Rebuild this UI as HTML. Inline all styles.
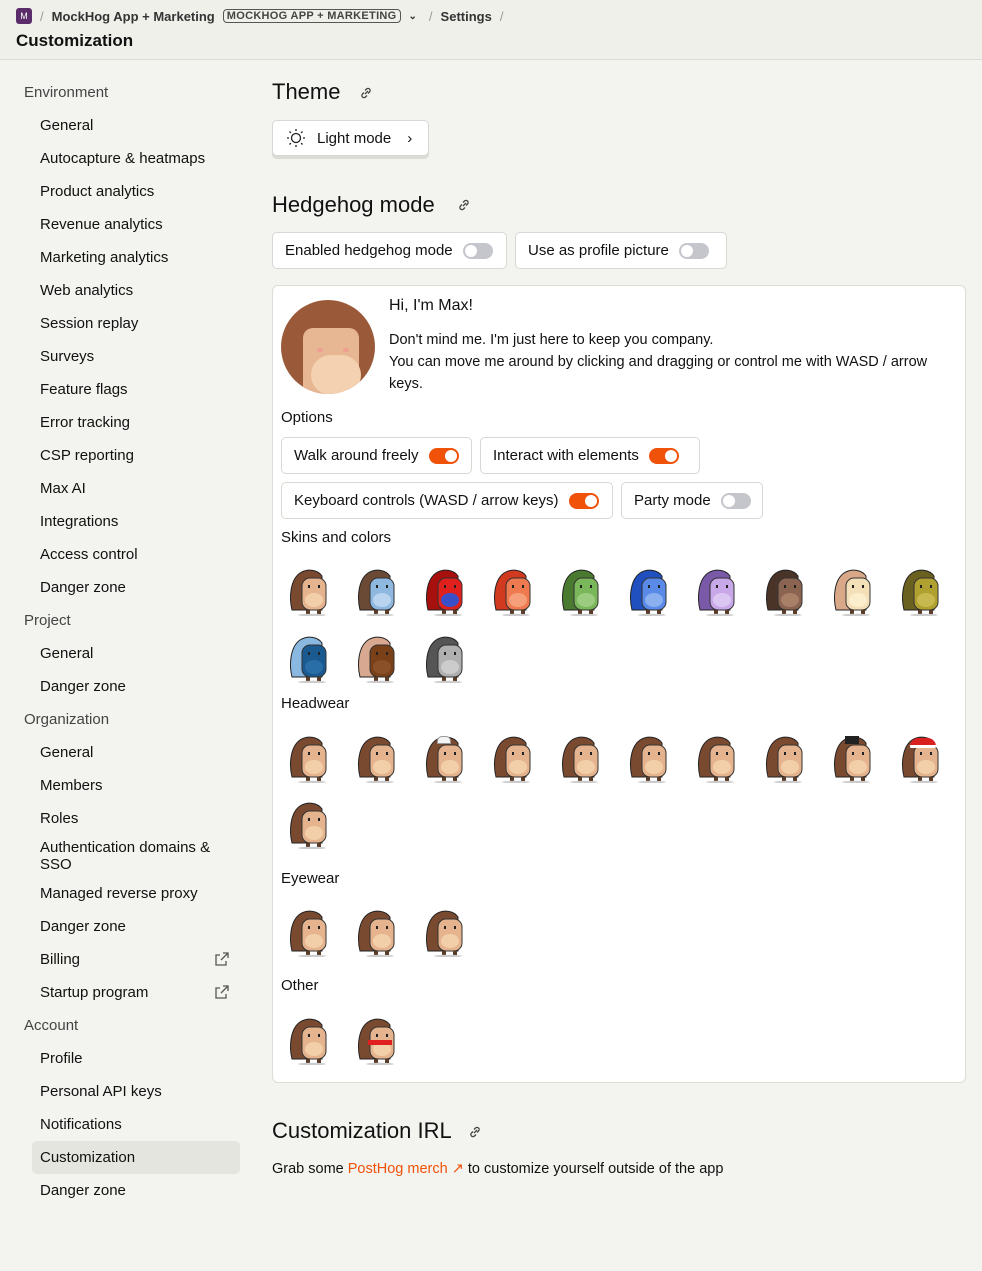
<!DOCTYPE html>
<html><head><meta charset="utf-8"><style>
*{box-sizing:border-box;margin:0;padding:0}
body{width:982px;height:1271px;background:#f3f3ef;font-family:"Liberation Sans",sans-serif;color:#111;position:relative;overflow:hidden;font-size:15px}
.top{position:absolute;left:0;top:0;width:982px;height:60px;border-bottom:1px solid #dcdcd6;background:#f0f0eb}
.bc{position:absolute;left:16px;top:8px;font-size:13px;font-weight:bold;color:#333;display:flex;align-items:center;gap:8px;white-space:nowrap}
.logo{width:16px;height:16px;background:#5a2d6a;border-radius:3px;color:#fff;font-size:9px;display:flex;align-items:center;justify-content:center;font-weight:normal}
.tag{border:1px solid #555;border-radius:4px;font-size:11px;padding:0 3px;letter-spacing:.3px;color:#444}
.sl{color:#999;font-weight:normal}
.title{position:absolute;left:16px;top:31px;font-size:17px;font-weight:bold}
.nav div{position:absolute;left:40px;font-size:15px;white-space:nowrap}
.nav div.h{left:24px;color:#444}
.nav .act{left:32px;width:208px;height:33px;background:#e5e5e0;border-radius:5px;padding:8px 8px}
.ext{position:absolute;left:214px;width:16px;height:16px}
h2{position:absolute;left:272px;font-size:22px;font-weight:normal}
.lk{position:absolute;width:12px;height:12px}
.btn{position:absolute;background:#fff;border:1px solid #d8d8d2;border-radius:5px;font-size:15px;display:flex;align-items:center;padding:0 12px;gap:10px;white-space:nowrap}
.tg{width:30px;height:16px;border-radius:8px;background:#c5c6cc;position:relative;flex:none}
.tg::after{content:"";position:absolute;left:2px;top:2px;width:12px;height:12px;border-radius:50%;background:#fff}
.tg.on{background:#f0520a}.tg.on::after{left:16px}
.card{position:absolute;left:272px;top:285px;width:694px;height:798px;background:#fff;border:1px solid #ddddd8;border-radius:6px}
.t{position:absolute;font-size:15px;white-space:nowrap}
.hh{position:absolute;width:44px;height:48px}
</style></head><body>
<svg width="0" height="0" style="position:absolute"><defs>
<symbol id="h" viewBox="0 0 44 48">
<path d="M4 42 C1 30 2 12 12 5 C20 0 30 2 34 8 L34 42 Z" fill="var(--s)" stroke="#222" stroke-width="1"/>
<rect x="14" y="10" width="24" height="32" rx="8" fill="var(--b)" stroke="#333" stroke-width="1"/>
<ellipse cx="26" cy="32" rx="9" ry="7" fill="var(--c)"/>
<rect x="20" y="17" width="2" height="3" fill="#222"/><rect x="30" y="17" width="2" height="3" fill="#222"/>
<rect x="18" y="42" width="4" height="4" fill="#5a3b28"/><rect x="29" y="42" width="4" height="4" fill="#5a3b28"/>
<ellipse cx="24" cy="47" rx="14" ry="1.2" fill="#ccc"/>
</symbol></defs></svg>
<div class="top">
<div class="bc"><span class="logo">M</span><span class="sl">/</span>MockHog App + Marketing <span class="tag">MOCKHOG APP + MARKETING</span><span style="font-size:10px">⌄</span><span class="sl" style="margin-left:4px">/</span>Settings <span class="sl">/</span></div>
<div class="title">Customization</div>
</div>
<div class="nav">
<div class="h" style="top:84px">Environment</div>
<div style="top:117px">General</div><div style="top:150px">Autocapture &amp; heatmaps</div><div style="top:183px">Product analytics</div><div style="top:216px">Revenue analytics</div><div style="top:249px">Marketing analytics</div><div style="top:282px">Web analytics</div><div style="top:315px">Session replay</div><div style="top:348px">Surveys</div><div style="top:381px">Feature flags</div><div style="top:414px">Error tracking</div><div style="top:447px">CSP reporting</div><div style="top:480px">Max AI</div><div style="top:513px">Integrations</div><div style="top:546px">Access control</div><div style="top:579px">Danger zone</div>
<div class="h" style="top:612px">Project</div>
<div style="top:645px">General</div><div style="top:678px">Danger zone</div>
<div class="h" style="top:711px">Organization</div>
<div style="top:744px">General</div><div style="top:777px">Members</div><div style="top:810px">Roles</div><div style="top:839px;line-height:17px">Authentication domains &amp;<br>SSO</div><div style="top:885px">Managed reverse proxy</div><div style="top:918px">Danger zone</div><div style="top:951px">Billing</div><div style="top:984px">Startup program</div>
<div class="h" style="top:1017px">Account</div>
<div style="top:1050px">Profile</div><div style="top:1083px">Personal API keys</div><div style="top:1116px">Notifications</div><div class="act" style="top:1141px">Customization</div><div style="top:1182px">Danger zone</div>
</div>
<svg class="ext" style="top:951px" viewBox="0 0 16 16" fill="none" stroke="#555" stroke-width="1.3"><path d="M9 2h5v5M14 2L7 9M12 10v4H2V4h4"/></svg>
<svg class="ext" style="top:984px" viewBox="0 0 16 16" fill="none" stroke="#555" stroke-width="1.3"><path d="M9 2h5v5M14 2L7 9M12 10v4H2V4h4"/></svg>

<h2 style="top:79px">Theme</h2>
<svg class="lk" style="left:360px;top:87px" viewBox="0 0 12 12" fill="none" stroke="#444" stroke-width="1.3"><path d="M5 7l3-3M4 5.5L2.5 7a2 2 0 003 3L7 8.5M8 6.5L9.5 5a2 2 0 00-3-3L5 3.5"/></svg>
<div class="btn" style="left:272px;top:120px;width:157px;height:36px;box-shadow:0 3px 0 #dcdcd6"><svg width="22" height="22" viewBox="0 0 22 22" fill="none" stroke="#222" stroke-width="1.3"><circle cx="11" cy="11" r="4.5"/><path d="M11 2v2M11 18v2M2 11h2M18 11h2M4.5 4.5l1.4 1.4M16.1 16.1l1.4 1.4M4.5 17.5l1.4-1.4M16.1 5.9l1.4-1.4"/></svg>Light mode<span style="margin-left:6px;font-size:15px">›</span></div>

<h2 style="top:192px">Hedgehog mode</h2>
<svg class="lk" style="left:458px;top:199px" viewBox="0 0 12 12" fill="none" stroke="#444" stroke-width="1.3"><path d="M5 7l3-3M4 5.5L2.5 7a2 2 0 003 3L7 8.5M8 6.5L9.5 5a2 2 0 00-3-3L5 3.5"/></svg>
<div class="btn" style="left:272px;top:232px;width:235px;height:37px">Enabled hedgehog mode<span class="tg"></span></div>
<div class="btn" style="left:515px;top:232px;width:212px;height:37px">Use as profile picture<span class="tg"></span></div>

<div class="card">
<div style="position:absolute;left:8px;top:14px;width:94px;height:94px;border-radius:50%;background:#9a5a3a;overflow:hidden"><div style="position:absolute;left:22px;top:28px;width:56px;height:70px;background:#e7b793;border-radius:10px"></div><div style="position:absolute;left:30px;top:55px;width:50px;height:40px;background:#f4d1b0;border-radius:20px"></div><div style="position:absolute;left:36px;top:48px;width:6px;height:4px;background:#f0a090;border-radius:2px"></div><div style="position:absolute;left:62px;top:48px;width:6px;height:4px;background:#f0a090;border-radius:2px"></div></div>
<div class="t" style="left:116px;top:11px;font-size:16px">Hi, I'm Max!</div>
<div class="t" style="left:116px;top:43px;line-height:22px;font-size:14.5px">Don't mind me. I'm just here to keep you company.<br>You can move me around by clicking and dragging or control me with WASD / arrow<br>keys.</div>
<div class="t" style="left:8px;top:123px">Options</div>
<div class="btn" style="left:8px;top:151px;width:191px;height:37px">Walk around freely<span class="tg on"></span></div>
<div class="btn" style="left:207px;top:151px;width:220px;height:37px">Interact with elements<span class="tg on"></span></div>
<div class="btn" style="left:8px;top:196px;width:332px;height:37px">Keyboard controls (WASD / arrow keys)<span class="tg on"></span></div>
<div class="btn" style="left:348px;top:196px;width:142px;height:37px">Party mode<span class="tg"></span></div>
<div class="t" style="left:8px;top:243px">Skins and colors</div>
<div class="t" style="left:8px;top:409px">Headwear</div>
<div class="t" style="left:8px;top:584px">Eyewear</div>
<div class="t" style="left:8px;top:691px">Other</div>
</div>
<svg class="hh" style="left:288px;top:568px;--s:#7a4a30;--b:#e5b48e;--c:#f2cfa9"><use href="#h"/></svg>
<svg class="hh" style="left:356px;top:568px;--s:#6a4a34;--b:#8fb8e0;--c:#b9d4ee"><use href="#h"/></svg>
<svg class="hh" style="left:424px;top:568px;--s:#a8100e;--b:#e0201c;--c:#3a50c8"><use href="#h"/></svg>
<svg class="hh" style="left:492px;top:568px;--s:#d23a20;--b:#f07a50;--c:#f5a07a"><use href="#h"/></svg>
<svg class="hh" style="left:560px;top:568px;--s:#4a7a30;--b:#7ab65a;--c:#9ccc80"><use href="#h"/></svg>
<svg class="hh" style="left:628px;top:568px;--s:#2050c0;--b:#5a8ae8;--c:#8ab0f0"><use href="#h"/></svg>
<svg class="hh" style="left:696px;top:568px;--s:#7a5aa8;--b:#c8a8e8;--c:#dcc6f2"><use href="#h"/></svg>
<svg class="hh" style="left:764px;top:568px;--s:#4a3428;--b:#8a6450;--c:#a88068"><use href="#h"/></svg>
<svg class="hh" style="left:832px;top:568px;--s:#d8a888;--b:#f4e0b8;--c:#faeecc"><use href="#h"/></svg>
<svg class="hh" style="left:900px;top:568px;--s:#6a6020;--b:#b0a030;--c:#c8b850"><use href="#h"/></svg>
<svg class="hh" style="left:288px;top:635px;--s:#8ab8e0;--b:#1a5a90;--c:#2a6ea8"><use href="#h"/></svg>
<svg class="hh" style="left:356px;top:635px;--s:#d8a890;--b:#7a4018;--c:#8a5028"><use href="#h"/></svg>
<svg class="hh" style="left:424px;top:635px;--s:#555;--b:#b0b0b0;--c:#ccc"><use href="#h"/></svg>

<svg class="hh" style="left:288px;top:735px;--s:#7a4a30;--b:#e5b48e;--c:#f2cfa9"><use href="#h"/></svg>
<svg class="hh" style="left:356px;top:735px;--s:#7a4a30;--b:#e5b48e;--c:#f2cfa9"><use href="#h"/></svg>
<svg class="hh" style="left:424px;top:735px;--s:#7a4a30;--b:#e5b48e;--c:#f2cfa9"><use href="#h"/></svg>
<svg class="hh" style="left:492px;top:735px;--s:#7a4a30;--b:#e5b48e;--c:#f2cfa9"><use href="#h"/></svg>
<svg class="hh" style="left:560px;top:735px;--s:#7a4a30;--b:#e5b48e;--c:#f2cfa9"><use href="#h"/></svg>
<svg class="hh" style="left:628px;top:735px;--s:#7a4a30;--b:#e5b48e;--c:#f2cfa9"><use href="#h"/></svg>
<svg class="hh" style="left:696px;top:735px;--s:#7a4a30;--b:#e5b48e;--c:#f2cfa9"><use href="#h"/></svg>
<svg class="hh" style="left:764px;top:735px;--s:#7a4a30;--b:#e5b48e;--c:#f2cfa9"><use href="#h"/></svg>
<svg class="hh" style="left:832px;top:735px;--s:#7a4a30;--b:#e5b48e;--c:#f2cfa9"><use href="#h"/></svg>
<svg class="hh" style="left:900px;top:735px;--s:#7a4a30;--b:#e5b48e;--c:#f2cfa9"><use href="#h"/></svg>
<div style="position:absolute;left:910px;top:738px;width:26px;height:10px;background:#d82020;border-radius:10px 10px 2px 2px;border-bottom:3px solid #fff"></div>
<div style="position:absolute;left:845px;top:736px;width:14px;height:8px;background:#222"></div>
<div style="position:absolute;left:437px;top:736px;width:14px;height:8px;background:#f4f4f4;border:1px solid #999;border-radius:5px 5px 0 0"></div>
<svg class="hh" style="left:288px;top:801px;--s:#7a4a30;--b:#e5b48e;--c:#f2cfa9"><use href="#h"/></svg>

<svg class="hh" style="left:288px;top:909px;--s:#7a4a30;--b:#e5b48e;--c:#f2cfa9"><use href="#h"/></svg>
<svg class="hh" style="left:356px;top:909px;--s:#7a4a30;--b:#e5b48e;--c:#f2cfa9"><use href="#h"/></svg>
<svg class="hh" style="left:424px;top:909px;--s:#7a4a30;--b:#e5b48e;--c:#f2cfa9"><use href="#h"/></svg>
<svg class="hh" style="left:288px;top:1017px;--s:#7a4a30;--b:#e5b48e;--c:#f2cfa9"><use href="#h"/></svg>
<svg class="hh" style="left:356px;top:1017px;--s:#7a4a30;--b:#e5b48e;--c:#f2cfa9"><use href="#h"/></svg>
<div style="position:absolute;left:368px;top:1040px;width:24px;height:5px;background:#e02020"></div>

<h2 style="top:1118px">Customization IRL</h2>
<svg class="lk" style="left:469px;top:1126px" viewBox="0 0 12 12" fill="none" stroke="#444" stroke-width="1.3"><path d="M5 7l3-3M4 5.5L2.5 7a2 2 0 003 3L7 8.5M8 6.5L9.5 5a2 2 0 00-3-3L5 3.5"/></svg>
<div class="t" style="left:272px;top:1161px;font-size:14.5px">Grab some <span style="color:#f0520a">PostHog merch ↗</span> to customize yourself outside of the app</div>
</body></html>
